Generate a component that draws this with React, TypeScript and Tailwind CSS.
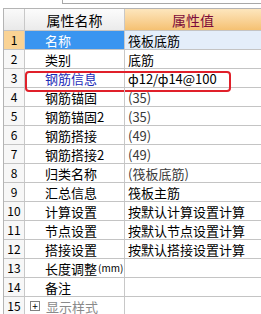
import React from "react";

type Row = { n: number; name: React.ReactNode; value: string; gray?: boolean };

const rows: Row[] = [
  { n: 1, name: "名称", value: "筏板底筋" },
  { n: 2, name: "类别", value: "底筋" },
  { n: 3, name: "钢筋信息", value: "ф12/ф14@100" },
  { n: 4, name: "钢筋锚固", value: "(35)", gray: true },
  { n: 5, name: "钢筋锚固2", value: "(35)", gray: true },
  { n: 6, name: "钢筋搭接", value: "(49)", gray: true },
  { n: 7, name: "钢筋搭接2", value: "(49)", gray: true },
  { n: 8, name: "归类名称", value: "(筏板底筋)", gray: true },
  { n: 9, name: "汇总信息", value: "筏板主筋" },
  { n: 10, name: "计算设置", value: "按默认计算设置计算" },
  { n: 11, name: "节点设置", value: "按默认节点设置计算" },
  { n: 12, name: "搭接设置", value: "按默认搭接设置计算" },
  {
    n: 13,
    name: (
      <>
        长度调整<span className="text-[10px] ml-[1px]">(mm)</span>
      </>
    ),
    value: "",
  },
  { n: 14, name: "备注", value: "" },
];

const font = { fontFamily: '"SimSun", "Noto Sans CJK SC", sans-serif' };

export default function App() {
  return (
    <div className="w-[261px] h-[314px] overflow-hidden bg-white text-[13px] leading-none text-black whitespace-nowrap" style={font}>
      <div className="ml-[62px] h-[4px] border-l border-b border-[#a8a8a8]" />
      <div className="mt-[4px] ml-[3px] border-l border-t border-[#b4b4b4]">
        {/* header */}
        <div className="flex h-[22px] border-b border-[#c4c4c4]">
          <div className="w-[21px] shrink-0 border-r border-[#c8c8c8] bg-gradient-to-b from-[#fafafa] to-[#e9e9e9]" />
          <div className="w-[100px] shrink-0 border-r border-[#c8c8c8] bg-gradient-to-b from-[#fcfcfc] to-[#ebebeb] flex items-center justify-center text-[14px]">
            属性名称
          </div>
          <div className="flex-1 bg-gradient-to-b from-[#fde6bd] to-[#f5c172] flex items-center justify-center text-[14px] text-[#7c0a3a]">
            属性值
          </div>
        </div>
        {rows.map((r) => {
          const sel = r.n === 1;
          return (
            <div key={r.n} className="relative flex h-[19px] border-b border-[#c4c4c4]">
              <div
                className={
                  "w-[21px] shrink-0 border-r border-[#c8c8c8] flex items-center justify-center text-[12px] " +
                  (sel ? "bg-[#fad394]" : "bg-[#f7f7f7]")
                }
              >
                {r.n}
              </div>
              <div
                className={
                  "w-[100px] shrink-0 border-r border-[#c8c8c8] flex items-center pl-[20px] " +
                  (sel ? "bg-[#3a95f0] text-white" : r.n === 3 ? "text-[#1c2bb8]" : "")
                }
              >
                {r.name}
              </div>
              <div
                className={
                  "flex-1 flex items-center pl-[3px] " +
                  (sel ? "bg-[#e4eefa]" : "") +
                  (r.gray ? " text-[#3a3a3a]" : "")
                }
              >
                {r.value}
              </div>
              {r.n === 3 && (
                <div className="absolute left-[21px] top-[2px] w-[206px] h-[21px] rounded-[4px] border-2 border-[#e0202a]" />
              )}
            </div>
          );
        })}
        <div className="flex h-[19px] border-b border-[#c4c4c4]">
          <div className="w-[21px] shrink-0 border-r border-[#c8c8c8] bg-[#f7f7f7] flex items-center justify-center text-[12px]">
            15
          </div>
          <div className="w-[100px] shrink-0 border-r border-[#c8c8c8] flex items-center pl-[5px] gap-[6px] text-[#8a8a8a]">
            <span className="w-[10px] h-[10px] border border-[#808080] bg-white flex items-center justify-center text-[10px] text-black leading-none">+</span>
            <span>显示样式</span>
          </div>
          <div className="flex-1" />
        </div>
      </div>
    </div>
  );
}
